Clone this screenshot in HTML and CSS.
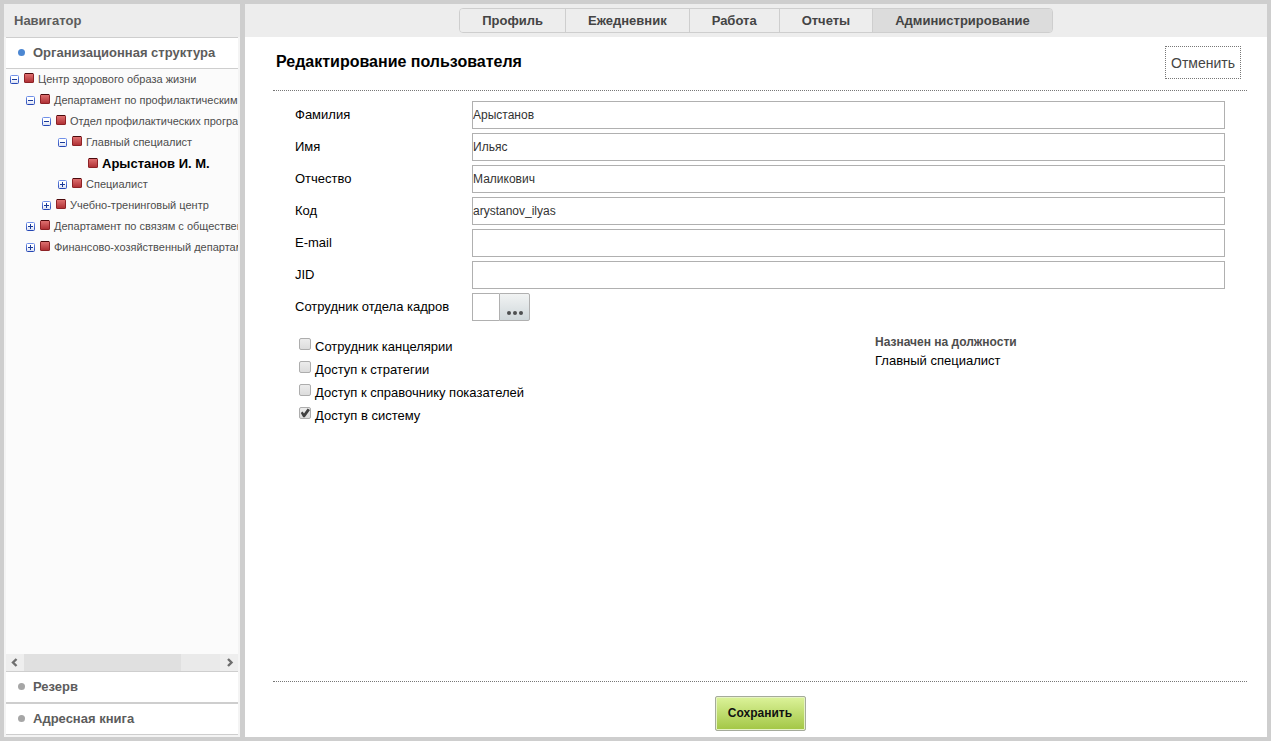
FILE: index.html
```html
<!DOCTYPE html>
<html lang="ru">
<head>
<meta charset="utf-8">
<title>Редактирование пользователя</title>
<link rel="stylesheet" href="styles.css">
</head>
<body>
<svg class="defs" aria-hidden="true">
  <defs>
    <linearGradient id="red" x1="0" y1="0" x2="0" y2="1"><stop offset="0" stop-color="#df7070"/><stop offset="1" stop-color="#b03236"/></linearGradient>
    <linearGradient id="box" x1="0" y1="0" x2="0" y2="1"><stop offset="0.4" stop-color="#ffffff"/><stop offset="1" stop-color="#d5dcf2"/></linearGradient>
    <linearGradient id="edge" x1="0" y1="0" x2="0" y2="1"><stop offset="0" stop-color="#7090e8"/><stop offset="1" stop-color="#2446b4"/></linearGradient>
    <symbol id="node" viewBox="0 0 10 10"><rect width="10" height="10" rx="1.5" fill="#8e2226"/><path d="M1 0h8v1H1z" fill="#4a0a0c"/><rect x="1" y="1" width="8" height="8" fill="url(#red)"/></symbol>
    <symbol id="minus" viewBox="0 0 9 9"><rect x=".5" y=".5" width="8" height="8" rx="1" fill="url(#box)" stroke="url(#edge)"/><path d="M2 4h5v1H2z" fill="#1a3a98"/></symbol>
    <symbol id="plus" viewBox="0 0 9 9"><rect x=".5" y=".5" width="8" height="8" rx="1" fill="url(#box)" stroke="url(#edge)"/><path d="M2 4h2V2h1v2h2v1H5v2H4V5H2z" fill="#1a3a98"/></symbol>
  </defs>
</svg>
<div class="app">
  <aside class="sidebar">
    <h2 class="sidebar-title">Навигатор</h2>
    <button class="section active" type="button"><span class="dot"></span>Организационная структура</button>
    <div class="tree-panel">
      <ul class="tree">
        <li class="row l0"><svg class="toggle"><use href="#minus"/></svg><svg class="node"><use href="#node"/></svg><span class="name">Центр здорового образа жизни</span></li>
        <li class="row l1"><svg class="toggle"><use href="#minus"/></svg><svg class="node"><use href="#node"/></svg><span class="name">Департамент по профилактическим программам</span></li>
        <li class="row l2"><svg class="toggle"><use href="#minus"/></svg><svg class="node"><use href="#node"/></svg><span class="name">Отдел профилактических программ</span></li>
        <li class="row l3"><svg class="toggle"><use href="#minus"/></svg><svg class="node"><use href="#node"/></svg><span class="name">Главный специалист</span></li>
        <li class="row l4 selected"><svg class="node"><use href="#node"/></svg><span>Арыстанов И. М.</span></li>
        <li class="row l3"><svg class="toggle"><use href="#plus"/></svg><svg class="node"><use href="#node"/></svg><span class="name">Специалист</span></li>
        <li class="row l2"><svg class="toggle"><use href="#plus"/></svg><svg class="node"><use href="#node"/></svg><span class="name">Учебно-тренинговый центр</span></li>
        <li class="row l1"><svg class="toggle"><use href="#plus"/></svg><svg class="node"><use href="#node"/></svg><span class="name">Департамент по связям с общественностью</span></li>
        <li class="row l1"><svg class="toggle"><use href="#plus"/></svg><svg class="node"><use href="#node"/></svg><span class="name">Финансово-хозяйственный департамент</span></li>
      </ul>
    </div>
    <div class="scrollbar">
      <button class="arrow" type="button" aria-label="Влево"><svg viewBox="0 0 18 17"><path d="M10.500 5 7 8.500 10.500 12" fill="none" stroke="#6e6e6e" stroke-width="2.400"/></svg></button>
      <div class="track"><div class="thumb"></div></div>
      <button class="arrow" type="button" aria-label="Вправо"><svg viewBox="0 0 18 17"><path d="M8 5 11.500 8.500 8 12" fill="none" stroke="#6e6e6e" stroke-width="2.400"/></svg></button>
    </div>
    <button class="section" type="button"><span class="dot"></span>Резерв</button>
    <button class="section" type="button"><span class="dot"></span>Адресная книга</button>
  </aside>
  <main class="main">
    <header class="topbar">
      <nav class="tabs">
        <button class="tab" type="button">Профиль</button>
        <button class="tab" type="button">Ежедневник</button>
        <button class="tab" type="button">Работа</button>
        <button class="tab" type="button">Отчеты</button>
        <button class="tab current" type="button">Администрирование</button>
      </nav>
    </header>
    <form class="content">
      <div class="heading">
        <h1>Редактирование пользователя</h1>
        <button class="cancel" type="button">Отменить</button>
      </div>
      <div class="body">
        <div class="fields">
          <label for="surname">Фамилия</label><input class="text" id="surname" type="text" value="Арыстанов">
          <label for="name">Имя</label><input class="text" id="name" type="text" value="Ильяс">
          <label for="patronymic">Отчество</label><input class="text" id="patronymic" type="text" value="Маликович">
          <label for="code">Код</label><input class="text" id="code" type="text" value="arystanov_ilyas">
          <label for="email">E-mail</label><input class="text" id="email" type="text">
          <label for="jid">JID</label><input class="text" id="jid" type="text">
          <label for="hr">Сотрудник отдела кадров</label>
          <div class="picker"><input class="text" id="hr" type="text"><button class="browse" type="button" aria-label="Выбрать"><svg viewBox="0 0 16 4"><g fill="#4d4f50"><circle cx="2" cy="2" r="2"/><circle cx="8" cy="2" r="2"/><circle cx="14" cy="2" r="2"/></g></svg></button></div>
        </div>
        <div class="lower">
          <div class="checks">
            <div class="check"><input type="checkbox" id="c1"><label for="c1">Сотрудник канцелярии</label></div>
            <div class="check"><input type="checkbox" id="c2"><label for="c2">Доступ к стратегии</label></div>
            <div class="check"><input type="checkbox" id="c3"><label for="c3">Доступ к справочнику показателей</label></div>
            <div class="check"><input type="checkbox" id="c4" checked><label for="c4">Доступ в систему</label></div>
          </div>
          <div class="positions">
            <h3>Назначен на должности</h3>
            <p>Главный специалист</p>
          </div>
        </div>
      </div>
      <div class="footer"><button class="save" type="submit">Сохранить</button></div>
    </form>
  </main>
</div>
</body>
</html>
```
FILE: styles.css
```css
* { box-sizing: border-box; }
body {
  margin: 0;
  background: #cecece;
  color: #000;
  font: 13px/16px "Liberation Sans", Arial, sans-serif;
}
h1, h2, h3, p, ul { margin: 0; padding: 0; }
button, input { font-family: inherit; }
svg { display: block; }
.defs { position: absolute; width: 0; height: 0; }
.app {
  display: flex;
  gap: 5px;
  height: 100vh;
  padding: 4px;
}

/* Sidebar */
.sidebar {
  display: flex;
  flex-direction: column;
  flex: 0 0 236px;
  min-width: 0;
  padding: 0 2px 2px;
  background: #f4f4f4;
}
.sidebar-title {
  margin: 0 -2px;
  padding: 0 10px;
  background: #ededed;
  color: #5c5c5c;
  font-size: 13px;
  line-height: 33px;
}
.section {
  display: flex;
  align-items: center;
  gap: 8px;
  height: 32px;
  padding: 0 0 2px 12px;
  border: 0;
  border-top: 1px solid #cecece;
  border-bottom: 1px solid #cecece;
  background: #fff;
  color: #5c5c5c;
  font-size: 13px;
  font-weight: bold;
  text-align: left;
}
.dot {
  width: 7px;
  height: 7px;
  border-radius: 50%;
  background: #a6a6a6;
}
.active .dot { background: #4c87d2; }
.tree-panel {
  flex: 1;
  overflow: hidden;
  background: #fbfbfb;
}
.tree { list-style: none; }
.row {
  display: flex;
  align-items: center;
  height: 21px;
  color: #4d4d4d;
  font-size: 11px;
  white-space: nowrap;
}
.l0 { padding-left: 4px; }
.l1 { padding-left: 20px; }
.l2 { padding-left: 36px; }
.l3 { padding-left: 52px; }
.l4 { padding-left: 82px; }
.toggle { flex: none; width: 9px; height: 9px; margin-right: 5px; }
.node { flex: none; width: 10px; height: 10px; margin: 0 4px 3px 0; }
.name { margin-bottom: 2px; }
.selected { color: #000; font-size: 13px; font-weight: bold; }
.selected .node { margin-bottom: 1px; }
.scrollbar {
  display: flex;
  height: 17px;
  background: #eaeaea;
}
.arrow {
  width: 18px;
  height: 17px;
  padding: 0;
  border: 0;
  background: #eee;
}
.track { flex: 1; }
.thumb { width: 80%; height: 17px; background: #e0e0e0; }

/* Main area */
.main {
  display: flex;
  flex-direction: column;
  flex: 1;
  min-width: 0;
  background: #fff;
}
.topbar {
  display: flex;
  justify-content: center;
  padding: 4px 0;
  background: #ededed;
}
.tabs {
  display: flex;
  height: 25px;
  border: 1px solid #cecece;
  border-radius: 4px;
  overflow: hidden;
}
.tab {
  padding: 0 22px;
  border: 0;
  border-right: 1px solid #cecece;
  background: #ededed;
  color: #444;
  font-size: 13px;
  font-weight: bold;
}
.tab.current { border-right: 0; background: #dcdcdc; }
.content {
  display: flex;
  flex-direction: column;
  flex: 1;
  padding: 0 20px 0 28px;
}
.heading {
  display: flex;
  align-items: center;
  justify-content: space-between;
  height: 54px;
  padding: 0 6px 2px 3px;
  border-bottom: 1px dotted #777;
}
.heading h1 { padding-bottom: 2px; font-size: 16px; }
.cancel {
  height: 33px;
  padding: 0 5px;
  border: 1px dotted #777;
  background: #fff;
  color: #444;
  font-size: 14px;
}
.body { flex: 1; padding: 10px 22px; }
.fields {
  display: grid;
  grid-template-columns: 177px 1fr;
  row-gap: 4px;
  align-items: center;
}
.text {
  width: 100%;
  height: 28px;
  padding: 0;
  border: 1px solid #b0b0b0;
  background: #fff;
  color: #333;
  font-size: 12px;
}
.picker { display: flex; }
.picker .text { width: 27px; border-right: 0; }
.browse {
  display: flex;
  align-items: flex-end;
  justify-content: center;
  width: 31px;
  height: 28px;
  padding: 0 0 5px;
  border: 1px solid #b0b0b0;
  border-radius: 0 2px 2px 0;
  background: linear-gradient(#f1f3f3, #d0d8db);
}
.browse svg { width: 16px; height: 4px; }
.lower {
  display: grid;
  grid-template-columns: 580px 1fr;
  padding-top: 13px;
}
.check {
  display: flex;
  height: 23px;
  padding: 4px 0 0 4px;
}
.check input {
  appearance: none;
  width: 12px;
  height: 12px;
  margin: 0 4px 0 0;
  border: 1px solid #adadad;
  border-radius: 2px;
  background: linear-gradient(#ececec, #dcdcdc);
}
.check input:checked::before {
  content: "";
  display: block;
  width: 10px;
  height: 10px;
  background: #404040;
  clip-path: polygon(8% 50%, 25% 36%, 40% 54%, 76% 4%, 100% 20%, 48% 92%, 32% 92%);
}
.check label { line-height: 17px; }
.positions h3 { color: #4d4d4d; font-size: 12px; line-height: 16px; }
.positions p { line-height: 22px; }
.footer {
  display: flex;
  justify-content: center;
  padding: 14px 0 6px;
  border-top: 1px dotted #777;
}
.save {
  min-width: 91px;
  height: 35px;
  padding: 0 12px 2px;
  border: 1px solid #a5ab9b;
  border-radius: 2px;
  background: linear-gradient(#dcf39a, #a2c644);
  box-shadow: inset 0 0 0 1px #e6f3c4;
  color: #111;
  font-size: 12px;
  font-weight: bold;
}
```
